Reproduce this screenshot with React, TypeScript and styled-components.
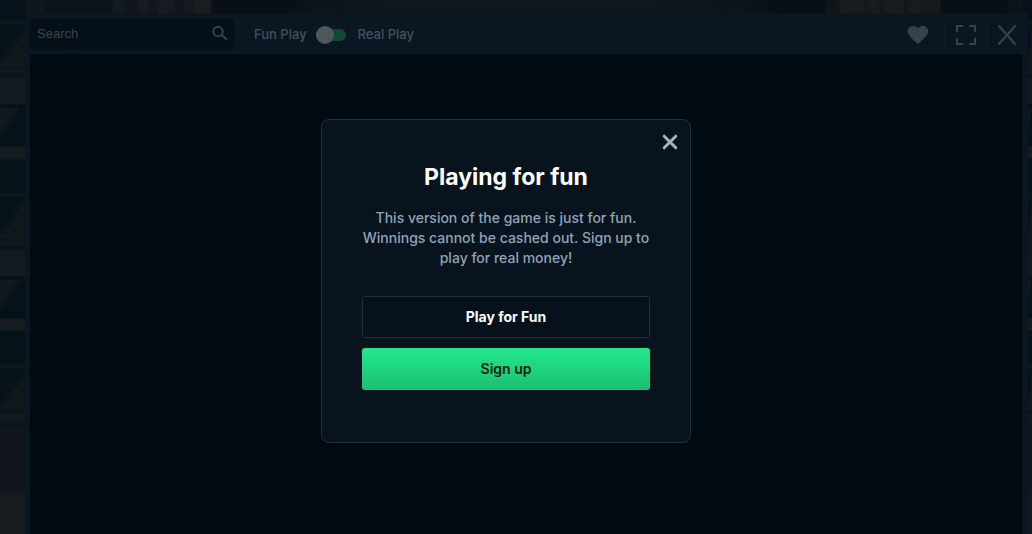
import React from "react";
import styled, { createGlobalStyle, css } from "styled-components";

const GlobalStyle = createGlobalStyle`
  *, *::before, *::after { box-sizing: border-box; }
  body {
    margin: 0;
    background: #080f15;
    font-family: Inter, "Liberation Sans", sans-serif;
  }
  button, input { font: inherit; }
`;

const Page = styled.div`
  display: grid;
  grid-template-columns: 25px minmax(0, 1fr) 4px;
  grid-template-rows: 13px 1fr;
  min-height: 100vh;
`;

const Ceiling = styled.div`
  grid-column: 1 / -1;
  background: linear-gradient(
    90deg,
    #06111a 0 25px, #10171a 28px 45px, #0b1218 45px 112px, #141a1e 113px 124px,
    #10171c 125px 138px, #171b1f 139px 148px, #10161b 150px 156px, #171b1f 157px 174px,
    #0e151b 176px 184px, #14191e 186px 194px, #1b1e21 197px 210px, #091014 212px 285px,
    #0c131a 310px, #11171d 400px, #12171d 620px, #0d141a 740px, #080f12 785px 825px,
    #0f1518 826px 839px, #1a1c1f 841px 864px, #121719 866px, #191b1d 870px 878px,
    #101619 882px, #191b1d 887px 902px, #111619 906px, #191b1d 912px 920px,
    #15191b 924px 940px, #080e14 941px 1006px, #0c1217 1008px 1022px, #06111a 1024px
  );
`;

const WallStrip = styled.div`
  display: flex;
  flex-direction: column;
  padding-top: 8px;
  background: #061119;
`;

const Brick = styled.div`
  flex: none;
  height: 172px;
  background-image:
    linear-gradient(to bottom right, transparent 45%, #10181c 65%),
    linear-gradient(to bottom right, #12191d 30%, transparent 45%),
    linear-gradient(
      #10181c 0 3px, #061118 4px 40px, #13191f 41px 44px, #0f161c 45px 48px,
      #12191f 49px 52px, #0e151a 53px 56px, #12191f 57px 83px, #091014 84px 87px,
      #061218 88px 125px, #161b1f 126px 137px, #051218 138px 172px
    );
  background-size: 100% 36px, 100% 38px, 100% 172px;
  background-position: 0 4px, 0 87px, 0 0;
  background-repeat: no-repeat;
`;

const Plinth = styled.div`
  flex: 1;
  min-height: 130px;
  background:
    linear-gradient(to bottom right, transparent 45%, #10181c 65%) 0 4px / 100% 36px no-repeat,
    linear-gradient(
      #12191d 0 3px, #061118 4px 40px, #13191f 41px 44px,
      #0e151a 45px 48px, #12191f 49px 57px, #0d1419 59px 63px,
      #10161c 64px 127px, #161b1f 130px
    );
`;

const Frame = styled.main`
  display: flex;
  flex-direction: column;
  background: #0a1722;
  padding: 0 6px 0 5px;
`;

const Toolbar = styled.header`
  display: flex;
  align-items: center;
  height: 41px;
`;

const Stage = styled.div`
  flex: 1;
  background: #020a11;
`;

const SearchBox = styled.label`
  display: flex;
  align-items: center;
  width: 204px;
  height: 30px;
  padding: 0 5px 0 7px;
  border-radius: 4px;
  background: #050f17;
`;

const SearchInput = styled.input`
  flex: 1;
  min-width: 0;
  padding: 0;
  border: 0;
  outline: 0;
  background: none;
  color: #3b444c;
  font-family: "Liberation Sans", sans-serif;
  font-size: 13px;
  &::placeholder { color: #3b444c; opacity: 1; }
`;

const ModeSwitch = styled.div`
  display: flex;
  align-items: center;
  gap: 9px;
  margin-left: 20px;
  color: #46505a;
  font-size: 13px;
  font-weight: 500;
  line-height: 16px;
`;

const Toggle = styled.input`
  appearance: none;
  display: flex;
  align-items: center;
  width: 30px;
  height: 12px;
  margin: 2px 3px 0 0;
  background: #0b4a35;
  border-radius: 6px;
  &::before {
    content: "";
    flex: none;
    width: 18px;
    height: 18px;
    border-radius: 50%;
    background: #50565d;
  }
  &:checked { justify-content: flex-end; }
`;

const Actions = styled.div`
  display: flex;
  align-items: center;
  margin-left: auto;
`;

const IconButton = styled.button<{ $divided?: boolean; $width: number }>`
  display: flex;
  align-items: center;
  justify-content: center;
  width: ${(p) => p.$width}px;
  height: 28px;
  padding: 2px 0 0;
  border: 0;
  border-left: 1px solid ${(p) => (p.$divided ? "#0f1d28" : "transparent")};
  background: none;
  color: #36414b;
  &:last-child { padding-left: 4px; }
`;

const Overlay = styled.div`
  position: fixed;
  inset: 0;
  display: flex;
  align-items: flex-start;
  justify-content: center;
  padding: 119px 20px 24px 0;
  overflow: auto;
`;

const Dialog = styled.section`
  display: flex;
  flex-direction: column;
  width: 370px;
  max-width: 100%;
  padding: 12px 40px 52px;
  border: 1px solid #22303c;
  border-radius: 8px;
  background: #07131d;
  text-align: center;
`;

const CloseButton = styled.button`
  display: flex;
  align-self: flex-end;
  margin-right: -30px;
  padding: 0;
  border: 0;
  background: none;
  color: #a0b3c9;
`;

const Title = styled.h1`
  margin: 10px 0 16px;
  color: #fff;
  font-size: 23px;
  font-weight: 700;
  line-height: 30px;
`;

const Message = styled.p`
  margin: 0 0 28px;
  color: #91a4b9;
  font-size: 14px;
  font-weight: 500;
  line-height: 20px;
`;

const Choices = styled.div`
  display: flex;
  flex-direction: column;
  gap: 10px;
`;

const ChoiceButton = styled.button<{ $primary?: boolean }>`
  height: 42px;
  padding: 0;
  border-radius: 3px;
  font-size: 14px;
  line-height: 20px;
  ${(p) =>
    p.$primary
      ? css`
          border: 1px solid transparent;
          background: linear-gradient(#22e88a, #1dbf73) border-box;
          color: #05240f;
          font-weight: 600;
        `
      : css`
          border: 1px solid #22303d;
          background: #06111b;
          color: #fff;
          font-weight: 700;
        `}
`;

function Wall() {
  return (
    <WallStrip aria-hidden="true">
      <Brick />
      <Brick />
      <Plinth />
    </WallStrip>
  );
}

function SearchIcon() {
  return (
    <svg width="18" height="18" viewBox="0 0 18 18" fill="none" stroke="#37414a" strokeWidth="2">
      <circle cx="7" cy="6.5" r="4.7" />
      <path d="M10.5 9.800 16 14.800" />
    </svg>
  );
}

function HeartIcon() {
  return (
    <svg width="22" height="20" viewBox="0 0 22 20" fill="currentColor">
      <path d="M11 19 9.5 17.7C4.2 12.9 .8 10 .8 6.2.8 3.2 3.100 1 6.200 1 8 1 9.900 1.900 11 3.300 12.100 1.900 14 1 15.800 1 18.900 1 21.200 3.200 21.200 6.200c0 3.800-3.400 6.700-8.700 11.500z" />
    </svg>
  );
}

function ExpandIcon() {
  return (
    <svg width="20" height="20" viewBox="0 0 20 20" fill="none" stroke="currentColor" strokeWidth="2">
      <path d="M1 7V1h6M13 1h6v6M19 13v6h-6M7 19H1v-6" />
    </svg>
  );
}

function ExitIcon() {
  return (
    <svg width="20" height="20" viewBox="0 0 20 20" fill="none" stroke="currentColor" strokeWidth="2.200">
      <path d="M1.500 .5l17 19M18.500 .5l-17 19" />
    </svg>
  );
}

function CloseIcon() {
  return (
    <svg width="20" height="20" viewBox="0 0 20 20" fill="none" stroke="currentColor" strokeWidth="3" strokeLinecap="round">
      <path d="M4.200 4.200l11.600 11.600M15.800 4.200L4.200 15.800" />
    </svg>
  );
}

export default function App() {
  return (
    <>
      <GlobalStyle />
      <Page>
        <Ceiling />
        <Wall />
        <Frame>
          <Toolbar>
            <SearchBox>
              <SearchInput type="text" placeholder="Search" aria-label="Search" />
              <SearchIcon />
            </SearchBox>
            <ModeSwitch>
              <span>Fun Play</span>
              <Toggle type="checkbox" role="switch" id="real-play" />
              <label htmlFor="real-play">Real Play</label>
            </ModeSwitch>
            <Actions>
              <IconButton $width={54} aria-label="Favourite"><HeartIcon /></IconButton>
              <IconButton $width={42} $divided aria-label="Full screen"><ExpandIcon /></IconButton>
              <IconButton $width={36} $divided aria-label="Exit game"><ExitIcon /></IconButton>
            </Actions>
          </Toolbar>
          <Stage />
        </Frame>
        <Wall />
      </Page>
      <Overlay>
        <Dialog role="dialog" aria-modal="true" aria-labelledby="dialog-title">
          <CloseButton aria-label="Close"><CloseIcon /></CloseButton>
          <Title id="dialog-title">Playing for fun</Title>
          <Message>
            This version of the game is just for fun. Winnings cannot be cashed out. Sign up to play for real money!
          </Message>
          <Choices>
            <ChoiceButton>Play for Fun</ChoiceButton>
            <ChoiceButton $primary>Sign up</ChoiceButton>
          </Choices>
        </Dialog>
      </Overlay>
    </>
  );
}
